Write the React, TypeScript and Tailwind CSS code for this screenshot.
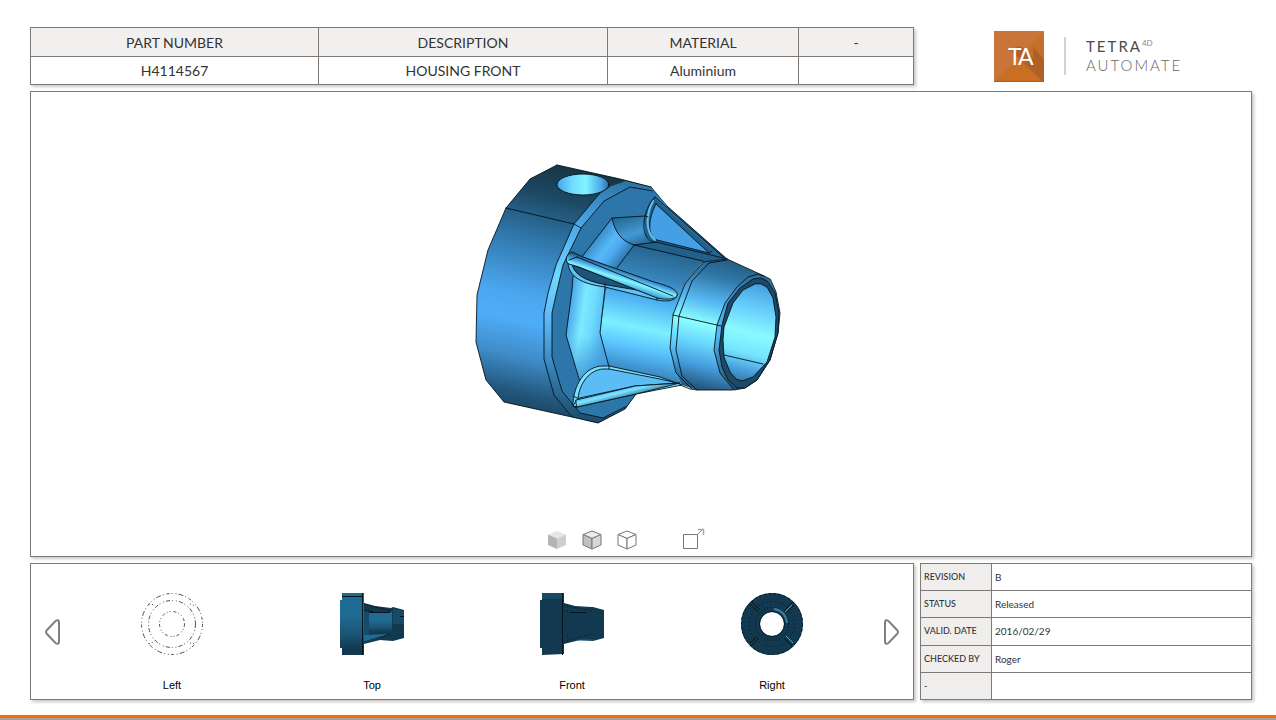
import type { ReactNode } from "react";

const partColumns = [
  { label: "PART NUMBER", value: "H4114567", width: "w-[288px]" },
  { label: "DESCRIPTION", value: "HOUSING FRONT", width: "w-[289px]" },
  { label: "MATERIAL", value: "Aluminium", width: "w-[191px]" },
  { label: "-", value: "", width: "w-[115px]" },
];

const revisionRows = [
  { label: "REVISION", value: "B" },
  { label: "STATUS", value: "Released" },
  { label: "VALID. DATE", value: "2016/02/29" },
  { label: "CHECKED BY", value: "Roger" },
  { label: "-", value: "" },
];

const PartTable = () => (
  <table className="w-full table-fixed border-collapse text-center text-sm leading-5 text-[#333] shadow-[2px_2px_3px_rgba(0,0,0,0.22)]">
    <thead>
      <tr className="h-[29px] bg-[#f2f0ef]">
        {partColumns.map((col) => (
          <th
            key={col.label}
            scope="col"
            className={`${col.width} border border-[#7d7a77] p-0 pt-[2px] font-normal`}
          >
            {col.label}
          </th>
        ))}
      </tr>
    </thead>
    <tbody>
      <tr className="h-[28px] bg-white">
        {partColumns.map((col) => (
          <td key={col.label} className="border border-[#7d7a77] p-0">
            {col.value}
          </td>
        ))}
      </tr>
    </tbody>
  </table>
);

const Logo = () => (
  <div className="flex items-center gap-5 pl-20">
    <svg width="50" height="51" viewBox="0 0 50 51" aria-hidden="true">
      <rect width="50" height="51" rx="1" fill="#c66f2b" />
      <path d="M0 0H50L0 51Z" fill="#c8743a" />
      <path d="M0 51L25 26L50 51Z" fill="#c86f24" />
      <path d="M15 18L27 15L50 37V51H49Z" fill="#b06026" />
      <path d="M39 16L50 28V37L40 34Z" fill="#b06026" />
      <path d="M0 50.5H50" stroke="#a95a22" />
      <text
        x="14"
        y="34"
        fill="#fff"
        fontFamily="Lato, sans-serif"
        fontSize="23"
        letterSpacing="-2"
      >
        TA
      </text>
    </svg>
    <span className="h-[38px] w-[2px] bg-[#d3d3d3]" />
    <div className="text-[15px] leading-[19px] tracking-[2px]">
      <div className="flex text-[#4a4a4a]">
        TETRA
        <sup className="top-0 text-[8px] leading-3 tracking-normal text-[#888]">
          4D
        </sup>
      </div>
      <div className="font-light text-[#666]">AUTOMATE</div>
    </div>
  </div>
);

const Housing = () => (
  <svg
    width="342"
    height="270"
    viewBox="470 160 342 270"
    role="img"
    aria-label="Housing front"
  >
    <defs>
      <linearGradient id="body" gradientUnits="userSpaceOnUse" x1="568" y1="168" x2="512" y2="418">
        <stop offset="0" stopColor="#173546" />
        <stop offset="0.12" stopColor="#1c4863" />
        <stop offset="0.3" stopColor="#2f77aa" />
        <stop offset="0.52" stopColor="#4ba6ee" />
        <stop offset="0.62" stopColor="#4fadf8" />
        <stop offset="0.76" stopColor="#3f8cc8" />
        <stop offset="0.9" stopColor="#22567a" />
        <stop offset="1" stopColor="#173e58" />
      </linearGradient>
      <linearGradient id="rim" gradientUnits="userSpaceOnUse" x1="620" y1="182" x2="590" y2="422">
        <stop offset="0" stopColor="#2c75a5" />
        <stop offset="0.2" stopColor="#4ba8e8" />
        <stop offset="0.42" stopColor="#6fd8ff" />
        <stop offset="0.6" stopColor="#5cb8fb" />
        <stop offset="0.8" stopColor="#3682b8" />
        <stop offset="1" stopColor="#1c4c6a" />
      </linearGradient>
      <linearGradient id="filletTop" gradientUnits="userSpaceOnUse" x1="630" y1="214" x2="642" y2="248">
        <stop offset="0" stopColor="#276894" />
        <stop offset="0.55" stopColor="#419ad4" />
        <stop offset="1" stopColor="#215f89" />
      </linearGradient>
      <linearGradient id="filletMid" gradientUnits="userSpaceOnUse" x1="591" y1="235" x2="626" y2="262">
        <stop offset="0" stopColor="#2e7cb2" />
        <stop offset="0.45" stopColor="#57b8fa" />
        <stop offset="0.65" stopColor="#4ca9ee" />
        <stop offset="1" stopColor="#27689a" />
      </linearGradient>
      <linearGradient id="filletLow" gradientUnits="userSpaceOnUse" x1="567" y1="325" x2="606" y2="331">
        <stop offset="0" stopColor="#4ba9ea" />
        <stop offset="0.35" stopColor="#7deaff" />
        <stop offset="0.6" stopColor="#70dcff" />
        <stop offset="1" stopColor="#4daeef" />
      </linearGradient>
      <linearGradient id="filletShade" gradientUnits="userSpaceOnUse" x1="590" y1="335" x2="596" y2="375">
        <stop offset="0" stopColor="#3a8fd0" stopOpacity="0" />
        <stop offset="1" stopColor="#3a8fd0" stopOpacity="0.75" />
      </linearGradient>
      <linearGradient id="cone" gradientUnits="userSpaceOnUse" x1="668" y1="248" x2="640" y2="385">
        <stop offset="0" stopColor="#23618a" />
        <stop offset="0.22" stopColor="#3782b8" />
        <stop offset="0.4" stopColor="#4fb2f3" />
        <stop offset="0.6" stopColor="#7cf0ff" />
        <stop offset="0.74" stopColor="#5cc5ff" />
        <stop offset="0.9" stopColor="#3d8ec9" />
        <stop offset="1" stopColor="#265f86" />
      </linearGradient>
      <linearGradient id="barrel" gradientUnits="userSpaceOnUse" x1="738" y1="258" x2="705" y2="392">
        <stop offset="0" stopColor="#21597b" />
        <stop offset="0.17" stopColor="#3177a8" />
        <stop offset="0.36" stopColor="#58baf4" />
        <stop offset="0.52" stopColor="#8cffff" />
        <stop offset="0.66" stopColor="#6ad8ff" />
        <stop offset="0.82" stopColor="#459ddd" />
        <stop offset="1" stopColor="#204f70" />
      </linearGradient>
      <linearGradient id="chamfer" gradientUnits="userSpaceOnUse" x1="750" y1="275" x2="725" y2="388">
        <stop offset="0" stopColor="#2b6c96" />
        <stop offset="0.3" stopColor="#459ddb" />
        <stop offset="0.55" stopColor="#5abcf4" />
        <stop offset="1" stopColor="#204f70" />
      </linearGradient>
      <linearGradient id="bore" gradientUnits="userSpaceOnUse" x1="762" y1="284" x2="738" y2="382">
        <stop offset="0" stopColor="#43a0df" />
        <stop offset="0.25" stopColor="#67cdfc" />
        <stop offset="0.5" stopColor="#8afaff" />
        <stop offset="0.7" stopColor="#75e5ff" />
        <stop offset="0.86" stopColor="#4ba4df" />
        <stop offset="1" stopColor="#2e75a6" />
      </linearGradient>
      <linearGradient id="hole" x1="0" x2="1" y1="0" y2="0">
        <stop offset="0" stopColor="#46a4e6" />
        <stop offset="0.3" stopColor="#72dcff" />
        <stop offset="0.55" stopColor="#82f4ff" />
        <stop offset="0.85" stopColor="#4ca8e8" />
        <stop offset="1" stopColor="#2b6d98" />
      </linearGradient>
      <linearGradient id="ribRod" gradientUnits="userSpaceOnUse" x1="626" y1="270" x2="621" y2="286">
        <stop offset="0" stopColor="#1f5a80" />
        <stop offset="0.35" stopColor="#4cabea" />
        <stop offset="0.6" stopColor="#84f6ff" />
        <stop offset="1" stopColor="#3f9ad8" />
      </linearGradient>
      <linearGradient id="ribLow" gradientUnits="userSpaceOnUse" x1="626" y1="386" x2="629" y2="398">
        <stop offset="0" stopColor="#4cabe8" />
        <stop offset="0.4" stopColor="#7ce6ff" />
        <stop offset="1" stopColor="#2a6f9f" />
      </linearGradient>
      <linearGradient id="ribTop" gradientUnits="userSpaceOnUse" x1="684" y1="230" x2="693" y2="221">
        <stop offset="0" stopColor="#3a92cd" />
        <stop offset="1" stopColor="#194a69" />
      </linearGradient>
    </defs>

    <g stroke="#04131d" strokeWidth="0.9" strokeLinejoin="round" strokeLinecap="round">
      {/* flange side */}
      <path
        d="M557 165L530 179L506 208L488 250L477 295L476 342L486 380L504 402L572 417L598 423L625 409L636 394L655 330L652 187L620 179Z"
        fill="url(#body)"
        stroke="none"
      />
      {/* rim and front face */}
      <path
        d="M651 187L626 181L609 187L600 193L574 224L556 265L548 293L544 313V359L554 395L572 417L598 423L625 409L636 394L660 330L667 206Z"
        fill="url(#rim)"
        stroke="none"
      />
      <path
        d="M655 195L653 191L630 187L604 201L581 228L563 265L556 295L552 313V357L562 391L580 413L603 418L627 406L636 394L665 330L667 206Z"
        fill="#2c76a9"
        stroke="none"
      />
      <path
        d="M609 187L600 193L574 224L556 265L548 293L544 313V359L554 395L572 417M653 191L630 187L604 201L581 228L563 265L556 295L552 313V357L562 391L580 413L603 418L627 406"
        fill="none"
      />
      <path
        d="M557 165L620 179L651 187L667 206M557 165L530 179L506 208L488 250L477 295L476 342L486 380L504 402L572 417L598 423L625 409L636 394"
        fill="none"
      />
      <path d="M506 208L574 224L581 228" fill="none" />
      <ellipse cx="583" cy="184.500" rx="26" ry="10.500" fill="url(#hole)" />

      {/* fillet between flange and neck */}
      <path d="M612 218L645 216L646 234L660 243L634 245C622 241 615 233 612 218Z" fill="url(#filletTop)" stroke="none" />
      <path d="M612 218C615 233 622 241 634 245L617 268L605 290L573 280L581 258Z" fill="url(#filletMid)" stroke="none" />
      <path d="M573 276L605 287L600 333L609 367L590 371L580 382L566 335L572 290Z" fill="url(#filletLow)" stroke="none" />
      <path d="M566 335L600 333L609 367L590 371L580 382Z" fill="url(#filletShade)" stroke="none" />
      <path d="M645 216L612 218L581 258M573 276L572 290L566 335L580 382" fill="none" />

      {/* neck */}
      <path
        d="M634 245L657 242L703 261L685 284L673 315L670 348L676 373L682 385L660 378L609 367L600 333L606 290L617 268Z"
        fill="url(#cone)"
        stroke="none"
      />

      {/* upper rib */}
      <path d="M655 196L727 259L703 262L634 245L657 242L646 237L644 220L648 205Z" fill="#22608a" stroke="none" />
      <path d="M612 218C615 233 622 241 634 245L617 268M605 288L600 333L609 367M634 245L703 261M634 245L657 242" fill="none" />
      <path d="M651 187L667 206L727 259L720 257L656 199Z" fill="url(#ribTop)" stroke="none" />
      <path d="M656 204L709 253L657 240C647 236 648 219 656 204Z" fill="#459fe5" />
      <path d="M653 201C646 214 645 232 655 240" fill="none" stroke="#64c3f2" strokeWidth="2" />
      <path d="M655 197C645 207 641 226 646 236C649 242 655 242 660 243L711 255L727 259" fill="none" />
      <path d="M655 197L723 257M667 206L727 259M709 253L712 251M645 216L648 217" fill="none" />

      {/* barrel */}
      <path
        d="M727 259L764 276L760 290L735 320L722 360L734 390H697L682 385L676 373L670 348L673 315L685 284L703 262Z"
        fill="url(#barrel)"
        stroke="none"
      />
      <path
        d="M770 279L764 276L758 274L748 277L737 287L725 303L717 325L714 350L720 373L734 390L745 388L757 380L770 360L778 333L780 313L776 292Z"
        fill="url(#chamfer)"
      />
      <path
        d="M767 281L761 278L753 279L740 288L728 303L722 325L719 350L722 367L728 380L737 388L745 388L757 380L770 360L778 333L779 313L775 293Z"
        fill="#1d4a66"
      />
      <path
        d="M755 284L743 290L733 303L724 327L723 340L724 357L730 372L736 379L742 381L753 377L767 362L775 337L776 317L773 298L767 287L761 284Z"
        fill="url(#bore)"
      />
      <path d="M724 355L763 364M673 315L717 325L721 326" fill="none" />
      <path
        d="M727 259L703 262L685 284L673 315L670 348L676 373L692 389M727 260L709 263L692 281L679 316L676 350L682 376L697 390M727 259L764 276M680 385L690 389L697 390H733"
        fill="none"
      />

      {/* middle rib */}
      <path
        d="M568 263C569 277 582 284 605 287L657 300C667 302 676 301 677 295L660 291L580 265Z"
        fill="#5fc3f0"
      />
      <path d="M572 265C576 278 592 282 607 285L637 290L657 297L600 275Z" fill="#1d5478" />
      <path
        d="M572 252C565 254 565 262 569 264L579 267L657 298C670 301 679 298 677 293C674 288 668 286 654 282L583 257Z"
        fill="url(#ribRod)"
      />
      <path d="M577 257L673 296M569 260L577 257M605 287V284M657 300V298" fill="none" />

      {/* lower rib */}
      <path
        d="M573 406C573 385 585 366 603 366L609 366L660 377L682 385L636 394L577 407Z"
        fill="#7ae2fa"
      />
      <path d="M578 398C580 382 590 370 603 369L609 369L660 379L677 383L635 386Z" fill="#5cbdf6" />
      <path d="M576 400L635 386L680 383L636 394L577 407Z" fill="url(#ribLow)" />
      <path d="M573 396L579 399M609 366V369M576 401L573 406L577 407" fill="none" />
    </g>
  </svg>
);

const Cube = ({ top, left, right, stroke }: { top: string; left: string; right: string; stroke: string }) => (
  <svg width="20" height="20" viewBox="0 0 20 20" strokeLinejoin="round" stroke={stroke} aria-hidden="true">
    <path d="M10 1L19 4.500L10 8.500L1 4.500Z" fill={top} />
    <path d="M1 4.500L10 8.500V19L1 15Z" fill={left} />
    <path d="M19 4.500L10 8.500V19L19 15Z" fill={right} />
  </svg>
);

const ViewerToolbar = () => (
  <div className="mb-[6px] flex items-end pr-[31px]">
    <div className="flex gap-[15px]">
      <button type="button" aria-label="Shaded">
        <Cube top="#e6e6e6" left="#b4b4b4" right="#cfcfcf" stroke="none" />
      </button>
      <button type="button" aria-label="Shaded with edges">
        <Cube top="#ececec" left="#c0c0c0" right="#d8d8d8" stroke="#777" />
      </button>
      <button type="button" aria-label="Wireframe">
        <Cube top="#fff" left="#fff" right="#fff" stroke="#777" />
      </button>
    </div>
    <button type="button" aria-label="Full screen" className="ml-[46px]">
      <svg width="22" height="22" viewBox="0 0 22 22" fill="none" aria-hidden="true">
        <path d="M0.500 6.500H14.500V20.500H0.500Z" stroke="#777" />
        <path d="M14.500 6.500L20 1" stroke="#888" />
        <path d="M15 1.500H20.500V7" stroke="#aaa" strokeWidth="1.500" />
      </svg>
    </button>
  </div>
);

const LeftView = () => (
  <svg width="64" height="64" viewBox="0 0 64 64" fill="none" stroke="#222" strokeWidth="0.8" aria-hidden="true">
    <circle cx="32" cy="32" r="30.500" strokeDasharray="3 2 1 3 1 2 5 2 1 3" />
    <circle cx="32" cy="32" r="23.500" strokeDasharray="4 2 1 3 1 2" />
    <circle cx="32" cy="32" r="12.500" strokeDasharray="3 2 1 2 1 3" />
    <path d="M9 12L15 13M9 52L14 50M50 12L55 14M50 51L55 52" strokeDasharray="1 2" />
  </svg>
);

const TopView = () => (
  <svg width="64" height="64" viewBox="0 0 64 64" aria-hidden="true">
    <defs>
      <linearGradient id="topView" x1="0" x2="0" y1="0" y2="1">
        <stop offset="0" stopColor="#206b93" />
        <stop offset="0.35" stopColor="#206b93" />
        <stop offset="0.65" stopColor="#1b5677" />
        <stop offset="0.9" stopColor="#12394f" />
      </linearGradient>
    </defs>
    <path d="M2 1H24V11L35 14L51 16L53 15L64 18V46L53 49L40 48L24 52V63H2V56H0V8H2Z" fill="#12394f" />
    <path d="M2 1H24V63H2V56H0V8H2Z" fill="url(#topView)" />
    <path d="M24 20H29V43H24Z" fill="#174b68" />
    <path d="M29 20H52V43H29Z" fill="url(#topView)" />
    <path d="M24 43L49 42L24 51Z" fill="#206b93" />
    <path d="M53 17L64 19V32H53Z" fill="#184b68" />
    <path d="M22.500 1V63M2 4.500H22M60 24.500H64" stroke="#03141c" />
    <path d="M24 12L51 19M24 50L50 42M25 18L34 20" stroke="#03141c" strokeDasharray="2 1" />
    <path d="M29 20.500H50" stroke="#03141c" />
  </svg>
);

const FrontView = () => (
  <svg width="64" height="64" viewBox="0 0 64 64" aria-hidden="true">
    <path d="M2 1H24V11L35 14L51 15L53 15L64 18V46L53 49L40 48L24 52V62L2 63V56H0V8H2Z" fill="#12394f" />
    <path d="M2 1H22V7H2Z" fill="#184a66" />
    <path d="M22.500 1V63" stroke="#03141c" />
    <path d="M24 13L51 19M24 19H30M24 50L51 42M27 43H30" stroke="#03141c" strokeDasharray="1 2" />
    <path d="M30 20.500H46" stroke="#03141c" />
    <path d="M38 48H53" stroke="#1f6086" />
  </svg>
);

const RightView = () => (
  <svg width="64" height="64" viewBox="0 0 64 64" fill="none" aria-hidden="true">
    <circle cx="32" cy="32" r="21.500" stroke="#12394f" strokeWidth="19" />
    <circle cx="32" cy="32" r="30.500" stroke="#071c27" strokeDasharray="3 2" />
    <circle cx="32" cy="32" r="22.500" stroke="#04141c" strokeDasharray="1 3" />
    <circle cx="32" cy="32" r="16.500" stroke="#04141c" strokeDasharray="1 2" />
    <circle cx="32" cy="32" r="12.500" stroke="#071c27" />
    <path d="M34 17C41 18 46 23 47 31" stroke="#3a7da5" strokeWidth="2" />
    <path d="M10 12L18 20M12 10L20 18M11 54L19 46M10 51L17 44M52 11L44 19M54 13L46 21M44 46L52 54" stroke="#04141c" />
    <path d="M45 20L52 13M46 44L53 51" stroke="#5fa5cc" />
  </svg>
);

const views: { name: string; drawing: ReactNode }[] = [
  { name: "Left", drawing: <LeftView /> },
  { name: "Top", drawing: <TopView /> },
  { name: "Front", drawing: <FrontView /> },
  { name: "Right", drawing: <RightView /> },
];

const Arrow = ({ label, flip }: { label: string; flip?: boolean }) => (
  <button type="button" aria-label={label} className={flip ? "rotate-180" : ""}>
    <svg width="15" height="26" viewBox="0 0 15 26" fill="none" aria-hidden="true">
      <path
        d="M1.500 11.500L10.500 2Q13.500 0 14 3V23Q13.500 26 10.500 24L1.500 14.500Q0.500 13 1.500 11.500Z"
        stroke="#808080"
        strokeWidth="2"
      />
    </svg>
  </button>
);

const ViewCarousel = () => (
  <section className="flex items-center gap-3 border border-[#7d7a77] bg-white px-[14px] shadow-[2px_2px_3px_rgba(0,0,0,0.22)]">
    <Arrow label="Previous views" />
    <div className="grid flex-1 grid-cols-4">
      {views.map((view) => (
        <button
          key={view.name}
          type="button"
          className="flex flex-col items-center gap-[21px] pt-[21px] font-['Liberation_Sans',Arial,sans-serif] text-[11px] leading-4 text-black"
        >
          {view.drawing}
          {view.name}
        </button>
      ))}
    </div>
    <Arrow label="Next views" flip />
  </section>
);

const RevisionTable = () => (
  <table className="h-[137px] w-full table-fixed border-collapse bg-white text-left leading-4 text-[#333] shadow-[2px_2px_3px_rgba(0,0,0,0.22)]">
    <tbody>
      {revisionRows.map((row) => (
        <tr key={row.label}>
          <th
            scope="row"
            className="w-[71px] border border-[#7d7a77] bg-[#f0eeed] p-0 pl-[3px] text-[9px] font-medium"
          >
            {row.label}
          </th>
          <td className="border border-[#7d7a77] p-0 pl-[3px] text-[10px]">{row.value}</td>
        </tr>
      ))}
    </tbody>
  </table>
);

const App = () => {
  return (
    <div className="flex min-h-screen flex-col bg-white font-[Lato,Carlito,sans-serif]">
      <main className="flex flex-1 flex-col gap-[6px] pb-[15px] pl-[30px] pr-6 pt-[27px]">
        <header className="grid grid-cols-[1fr_338px]">
          <PartTable />
          <Logo />
        </header>

        <section className="flex flex-1 flex-col items-center justify-between border border-[#7d7a77] bg-white pt-[68px] shadow-[2px_2px_3px_rgba(0,0,0,0.22)]">
          <Housing />
          <ViewerToolbar />
        </section>

        <div className="grid grid-cols-[1fr_332px] gap-[6px]">
          <ViewCarousel />
          <RevisionTable />
        </div>
      </main>
      <footer className="h-[5px] border-b-2 border-[#a0a0a0] bg-[#ff6a00]" />
    </div>
  );
};

export default App;
